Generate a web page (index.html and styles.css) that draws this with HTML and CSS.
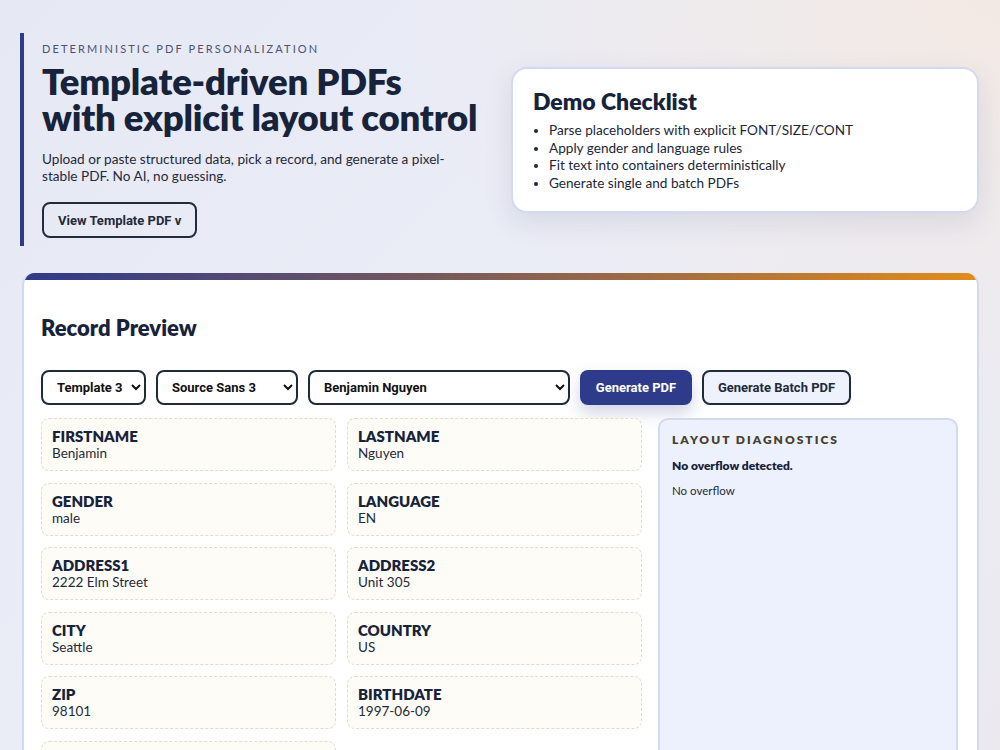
FILE: index.html
```html
<!DOCTYPE html>
<html lang="en">
<head>
<meta charset="utf-8">
<title>Template-driven PDFs</title>
<link rel="stylesheet" href="styles.css">
</head>
<body>
<div class="page">
  <header class="hero">
    <div class="hero-intro">
      <p class="eyebrow">Deterministic PDF Personalization</p>
      <h1 class="hero-title">Template-driven PDFs<br>with explicit layout control</h1>
      <p class="hero-lede">Upload or paste structured data, pick a record, and generate a pixel-stable PDF. No AI, no guessing.</p>
      <button class="btn btn-outline" type="button">View Template PDF v</button>
    </div>
    <aside class="checklist">
      <h2 class="checklist-title">Demo Checklist</h2>
      <ul class="checklist-items">
        <li>Parse placeholders with explicit FONT/SIZE/CONT</li>
        <li>Apply gender and language rules</li>
        <li>Fit text into containers deterministically</li>
        <li>Generate single and batch PDFs</li>
      </ul>
    </aside>
  </header>

  <main class="panel">
    <h2 class="panel-title">Record Preview</h2>
    <div class="toolbar">
      <select class="select select-template"><option>Template 3</option></select>
      <select class="select select-font"><option>Source Sans 3</option></select>
      <select class="select select-record"><option>Benjamin Nguyen</option></select>
      <button class="btn btn-primary" type="button">Generate PDF</button>
      <button class="btn btn-soft" type="button">Generate Batch PDF</button>
    </div>
    <div class="workspace">
      <div class="fields">
        <div class="field"><span class="field-key">FIRSTNAME</span><span class="field-val">Benjamin</span></div>
        <div class="field"><span class="field-key">LASTNAME</span><span class="field-val">Nguyen</span></div>
        <div class="field"><span class="field-key">GENDER</span><span class="field-val">male</span></div>
        <div class="field"><span class="field-key">LANGUAGE</span><span class="field-val">EN</span></div>
        <div class="field"><span class="field-key">ADDRESS1</span><span class="field-val">2222 Elm Street</span></div>
        <div class="field"><span class="field-key">ADDRESS2</span><span class="field-val">Unit 305</span></div>
        <div class="field"><span class="field-key">CITY</span><span class="field-val">Seattle</span></div>
        <div class="field"><span class="field-key">COUNTRY</span><span class="field-val">US</span></div>
        <div class="field"><span class="field-key">ZIP</span><span class="field-val">98101</span></div>
        <div class="field"><span class="field-key">BIRTHDATE</span><span class="field-val">1997-06-09</span></div>
        <div class="field"><span class="field-key">EMAIL</span><span class="field-val">benjamin.nguyen@example.com</span></div>
      </div>
      <section class="diagnostics">
        <h3 class="diag-title">Layout Diagnostics</h3>
        <p class="diag-status">No overflow detected.</p>
        <p class="diag-note">No overflow</p>
      </section>
    </div>
  </main>
</div>
</body>
</html>
```

FILE: styles.css
```css
* { box-sizing: border-box; }

html, body { margin: 0; }

body {
  min-height: 750px;
  font-family: "Lato", "Noto Sans", sans-serif;
  color: #17233a;
  background:
    radial-gradient(ellipse 600px 420px at 100% 0%, #f3e9e3 0%, rgba(243,233,227,0) 100%),
    linear-gradient(135deg, #e6e8f4 0%, #ebedf7 50%, #ebe9ee 100%);
}

.page {
  padding: 33px 21px 0 20px;
}

/* ---------- hero ---------- */
.hero {
  display: flex;
  align-items: flex-start;
  justify-content: space-between;
}

.hero-intro {
  width: 470px;
  border-left: 4px solid #2f3a8a;
  padding: 9px 0 8px 18px;
}

.eyebrow {
  margin: 0;
  font-size: 11px;
  letter-spacing: 2.1px;
  text-transform: uppercase;
  color: #4b5372;
  line-height: 14px;
}

.hero-title {
  margin: 7px 0 0;
  font-size: 36.5px;
  line-height: 36px;
  font-weight: 800;
  letter-spacing: -0.2px;
  color: #17233a;
}

.hero-lede {
  margin: 16px 0 0;
  font-size: 13.6px;
  line-height: 17px;
  color: #1f2a3c;
  width: 420px;
}

.btn {
  font-family: "Roboto", "Liberation Sans", Arial, sans-serif;
  font-weight: 700;
  font-size: 13px;
  border-radius: 8px;
  cursor: pointer;
}

.btn-outline {
  margin-top: 17px;
  height: 36px;
  padding: 0 14px;
  background: transparent;
  border: 2px solid #222c3c;
  color: #1f2a3a;
}

.checklist {
  margin-top: 34px;
  width: 468px;
  background: #fff;
  border: 2px solid #d3daf0;
  border-radius: 16px;
  padding: 19px 20px 19px 20px;
  box-shadow: 0 10px 28px rgba(60, 70, 120, 0.12);
}

.checklist-title {
  margin: 0;
  font-size: 23px;
  line-height: 26px;
  font-weight: 800;
  color: #17233a;
}

.checklist-items {
  margin: 8px 0 0;
  padding-left: 16px;
  font-size: 13.6px;
  line-height: 17.5px;
  color: #1d2738;
}

/* ---------- record panel ---------- */
.panel {
  margin: 27px 0 0 2px;
  background: #fff;
  border: 2px solid #d3daf0;
  border-top: 0;
  border-radius: 12px 12px 0 0;
  padding: 42px 19px 40px 17px;
  position: relative;
  overflow: hidden;
  min-height: 480px;
}

.panel::before {
  content: "";
  position: absolute;
  left: 0;
  right: 0;
  top: 0;
  height: 7px;
  background: linear-gradient(90deg, #2f3a8a 0%, #7a5a5a 45%, #e38b1a 100%);
}

.panel-title {
  margin: 0;
  font-size: 22px;
  line-height: 26px;
  font-weight: 800;
  color: #17233a;
}

.toolbar {
  display: flex;
  gap: 10px;
  margin-top: 29px;
  align-items: center;
}

.select {
  height: 35px;
  font-family: "Roboto", "Liberation Sans", Arial, sans-serif;
  font-weight: 700;
  font-size: 13px;
  color: #111;
  background: #fff;
  border: 2px solid #1f2a3a;
  border-radius: 8px;
  padding: 0 4px 0 10px;
}

.select-template { width: 105px; }
.select-font { width: 142px; }
.select-record { width: 262px; }

.btn-primary {
  height: 35px;
  width: 112px;
  border: 0;
  background: #2e3a8a;
  color: #fff;
  box-shadow: 0 8px 16px rgba(46, 58, 138, 0.22);
}

.btn-soft {
  height: 35px;
  width: 149px;
  background: #eef2fd;
  border: 2px solid #1f2a3a;
  color: #1f2a3a;
}

.workspace {
  display: grid;
  grid-template-columns: 1fr 300px;
  gap: 16px;
  margin-top: 13px;
  align-items: start;
}

.fields {
  display: grid;
  grid-template-columns: 1fr 1fr;
  column-gap: 11px;
  row-gap: 11.5px;
}

.field {
  height: 53px;
  background: #fdfcf6;
  border: 1px dashed #e2ddcc;
  border-radius: 8px;
  padding: 9px 10px;
  display: flex;
  flex-direction: column;
}

.field-key {
  font-size: 15px;
  line-height: 17px;
  font-weight: 800;
  color: #17233a;
}

.field-val {
  font-size: 13.5px;
  line-height: 17px;
  color: #1f2a3a;
}

.diagnostics {
  min-height: 360px;
  background: #edf1fd;
  border: 2px solid #d1d9f1;
  border-radius: 10px;
  padding: 12px 12px;
}

.diag-title {
  margin: 0;
  font-size: 12px;
  line-height: 16px;
  letter-spacing: 2px;
  text-transform: uppercase;
  font-weight: 800;
  color: #45402f;
}

.diag-status {
  margin: 10px 0 0;
  font-size: 12px;
  line-height: 15px;
  font-weight: 800;
  color: #17233a;
}

.diag-note {
  margin: 10px 0 0;
  font-size: 11.5px;
  line-height: 15px;
  color: #1f2a3a;
}
```
